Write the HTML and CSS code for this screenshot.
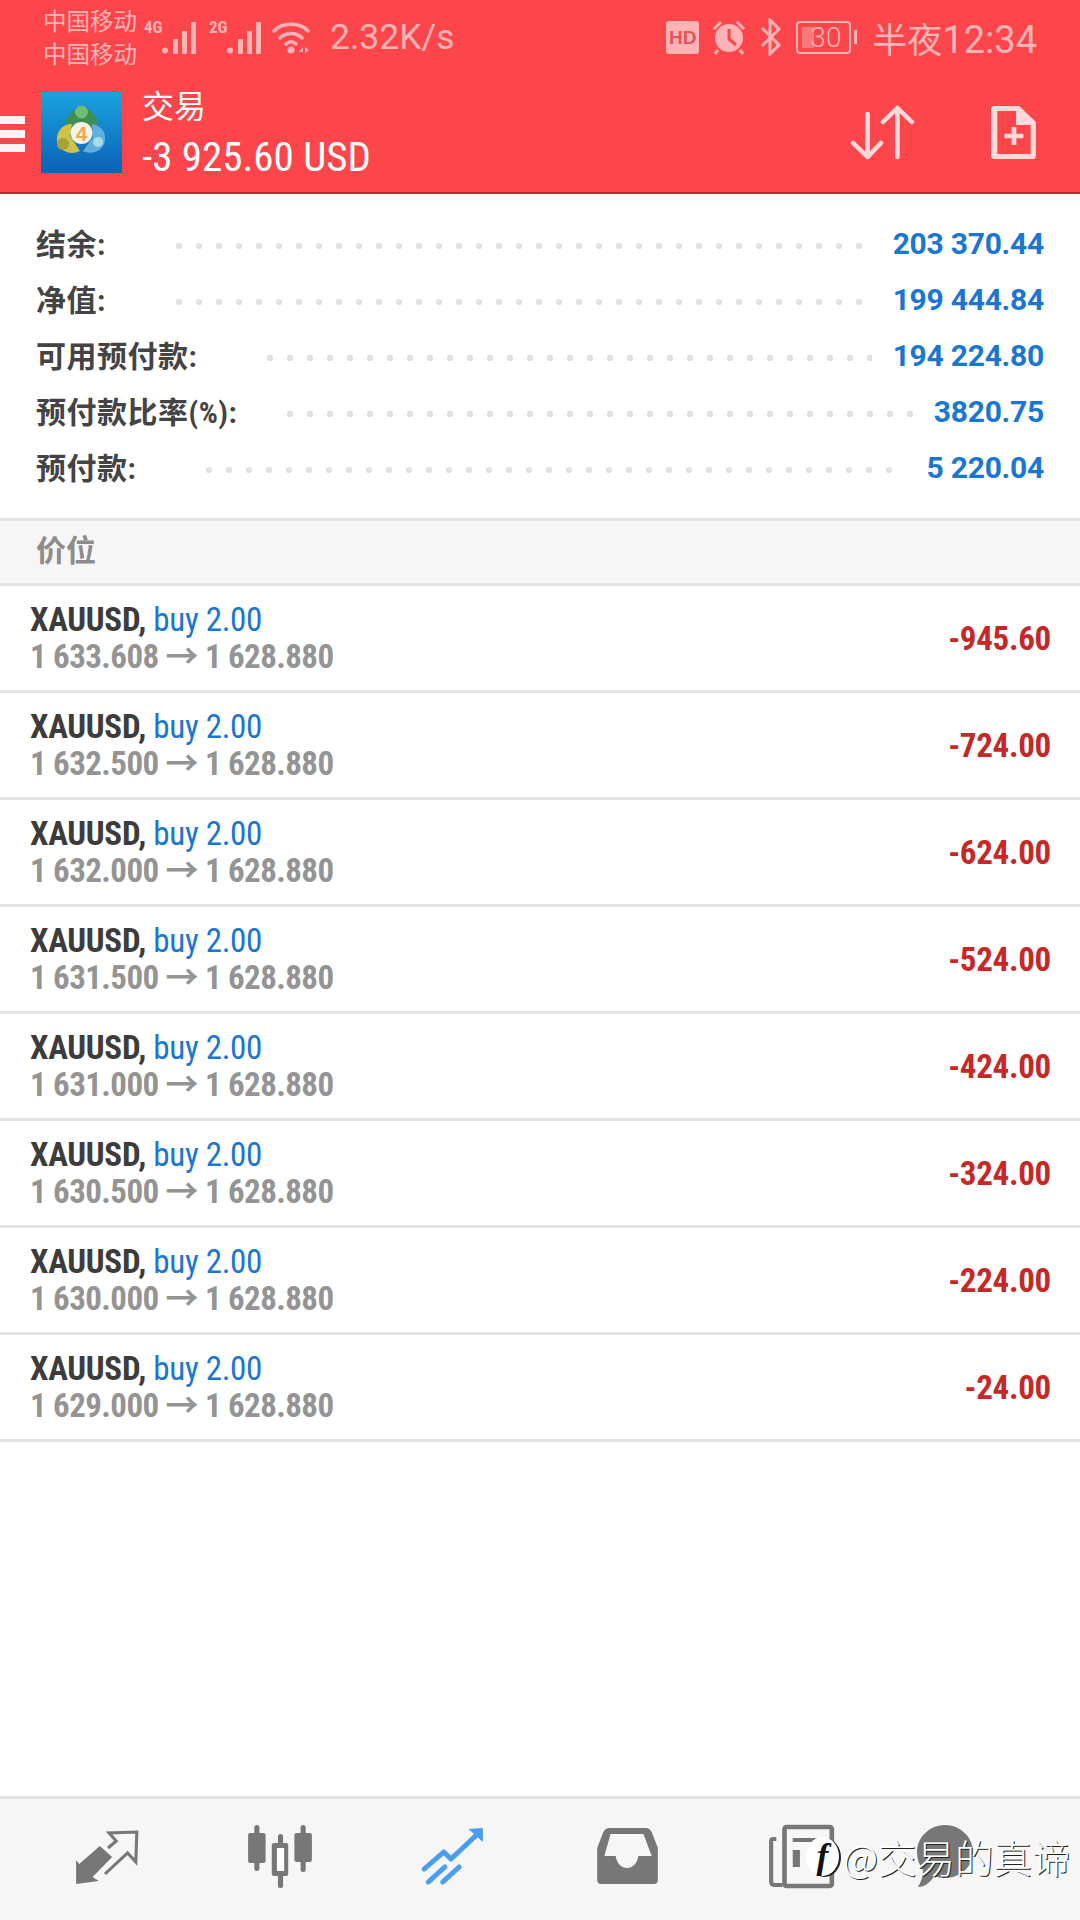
FILE: index.html
```html
<!DOCTYPE html>
<html>
    <head>
        <title>交易</title>
        <meta charset="utf-8">
        <link rel="stylesheet" href="styles.css">
    </head>
    <body>
        <section id="appBar">
            <div id="statusBar">
                <div class="carriers"><span>中国移动</span><span>中国移动</span></div>
                <span class="netType">4G</span>
                <svg class="signal" width="35" height="34" viewBox="0 0 35 34"><g fill="#ffb3b5"><circle cx="3" cy="30.500" r="3"/><rect x="11" y="19" width="5" height="15" rx="1"/><rect x="20" y="11" width="5" height="23" rx="1"/><rect x="29" y="2" width="5" height="32" rx="1"/></g></svg>
                <span class="netType second">2G</span>
                <svg class="signal" width="35" height="34" viewBox="0 0 35 34"><g fill="#ffb3b5"><circle cx="3" cy="30.500" r="3"/><rect x="11" y="19" width="5" height="15" rx="1"/><rect x="20" y="11" width="5" height="23" rx="1"/><rect x="29" y="2" width="5" height="32" rx="1"/></g></svg>
                <svg class="wifi" width="40" height="34" viewBox="0 0 40 34"><g fill="none" stroke="#ffb3b5" stroke-width="3.500" stroke-linecap="round"><path d="M2 11C10 2 28 2 36 11"/><path d="M8 18C14 12 24 12 30 18"/><path d="M14 24C17 21 21 21 24 24"/></g><circle cx="19" cy="30" r="3.500" fill="#ffb3b5"/><path d="M27 32l4-5v5zM33 27l4 3-4 3z" fill="#ffb3b5"/></svg>
                <span class="speed">2.32K/s</span>
                <span class="spacer"></span>
                <span class="hd">HD</span>
                <svg class="alarm" width="36" height="36" viewBox="0 0 34 36"><circle cx="17" cy="19" r="14" fill="#ffb3b5"/><path d="M17 10v10l7 6" fill="none" stroke="#fd464b" stroke-width="3"/><path d="M2 10L9 3M32 10L25 3M6 31l-3 4M28 31l3 4" stroke="#ffb3b5" stroke-width="3"/></svg>
                <svg class="bluetooth" width="24" height="38" viewBox="0 0 24 38"><path d="M3 10L20 27L11 36V2L20 11L3 28" fill="none" stroke="#ffb3b5" stroke-width="3"/></svg>
                <div class="battery"><span class="level"></span><span class="pct">30</span></div>
                <span class="nub"></span>
                <span class="clock"><span class="clockCjk">半夜</span>12:34</span>
            </div>
            <div id="toolbar">
                <div class="burger"><span></span><span></span><span></span></div>
                <svg class="logo" width="81" height="81" viewBox="41 92 81 81">
                    <defs><linearGradient id="logoBg" x1="0" y1="0" x2="0" y2="1"><stop offset="0" stop-color="#1aa3e0"/><stop offset="1" stop-color="#0b62b5"/></linearGradient></defs>
                    <rect x="41" y="92" width="81" height="81" fill="url(#logoBg)"/>
                    <path d="M65 130C64 117 73 108 82 108C91 108 99 117 98 130L82 124Z" fill="#3f8f52"/>
                    <circle cx="81.500" cy="112" r="6.500" fill="#6fbd72"/>
                    <path d="M80 151C70 156 59 151 57 141C56 131 63 124 72 124L70 136Z" fill="#cfc245"/>
                    <circle cx="63" cy="144" r="6" fill="#a9a238"/>
                    <path d="M83 151C93 156 104 150 105 140C106 131 100 125 92 124L93 137Z" fill="#62aede"/>
                    <circle cx="98" cy="142" r="5" fill="#a4dcec"/>
                    <circle cx="81.500" cy="133" r="11" fill="#f7f1e4"/>
                    <text x="81.500" y="141" class="logoFour" text-anchor="middle">4</text>
                </svg>
                <div class="titles">
                    <h1>交易</h1>
                    <p>-3 925.60 USD</p>
                </div>
                <span class="spacer"></span>
                <svg class="sortIcon" width="66" height="58" viewBox="840 104 64 58" preserveAspectRatio="none"><path d="M857 114V157M843 143L857 157L870 143M886 157V109M872 122L886 108L900 122" fill="none" stroke="#ffd9da" stroke-width="4.500" stroke-linecap="round" stroke-linejoin="round"/></svg>
                <svg class="newIcon" width="48" height="58" viewBox="976 104 46 58" preserveAspectRatio="none"><path d="M980 106H1004L1020 122V156Q1020 159 1017 159H980Q977 159 977 156V109Q977 106 980 106Z" fill="#ffd9da"/><path d="M983 111H1001V125H1015V154H983Z" fill="#fd464b"/><path d="M999 127V145M990 136H1008" stroke="#ffd9da" stroke-width="4.500"/></svg>
            </div>
        </section>

        <section id="summary">
            <div class="sumRow"><span class="sumLabel">结余:</span><span class="dots"></span><span class="sumValue">203 370.44</span></div>
            <div class="sumRow"><span class="sumLabel">净值:</span><span class="dots"></span><span class="sumValue">199 444.84</span></div>
            <div class="sumRow"><span class="sumLabel">可用预付款:</span><span class="dots"></span><span class="sumValue">194 224.80</span></div>
            <div class="sumRow"><span class="sumLabel">预付款比率(%):</span><span class="dots tight"></span><span class="sumValue">3820.75</span></div>
            <div class="sumRow"><span class="sumLabel">预付款:</span><span class="dots short"></span><span class="sumValue">5 220.04</span></div>
        </section>

        <h2 id="priceHeader">价位</h2>

        <section id="positions">
            <div class="position"><div><div class="line1">XAUUSD, <span class="buy">buy 2.00</span></div><div class="line2">1 633.608 → 1 628.880</div></div><span class="profit">-945.60</span></div>
            <div class="position"><div><div class="line1">XAUUSD, <span class="buy">buy 2.00</span></div><div class="line2">1 632.500 → 1 628.880</div></div><span class="profit">-724.00</span></div>
            <div class="position"><div><div class="line1">XAUUSD, <span class="buy">buy 2.00</span></div><div class="line2">1 632.000 → 1 628.880</div></div><span class="profit">-624.00</span></div>
            <div class="position"><div><div class="line1">XAUUSD, <span class="buy">buy 2.00</span></div><div class="line2">1 631.500 → 1 628.880</div></div><span class="profit">-524.00</span></div>
            <div class="position"><div><div class="line1">XAUUSD, <span class="buy">buy 2.00</span></div><div class="line2">1 631.000 → 1 628.880</div></div><span class="profit">-424.00</span></div>
            <div class="position"><div><div class="line1">XAUUSD, <span class="buy">buy 2.00</span></div><div class="line2">1 630.500 → 1 628.880</div></div><span class="profit">-324.00</span></div>
            <div class="position"><div><div class="line1">XAUUSD, <span class="buy">buy 2.00</span></div><div class="line2">1 630.000 → 1 628.880</div></div><span class="profit">-224.00</span></div>
            <div class="position"><div><div class="line1">XAUUSD, <span class="buy">buy 2.00</span></div><div class="line2">1 629.000 → 1 628.880</div></div><span class="profit">-24.00</span></div>
        </section>

        <nav id="bottomNav">
            <svg width="72" height="70" viewBox="69 42 70 70" preserveAspectRatio="none"><path d="M74 80L77 84L97 66L109 77L90 97L96 101L74 104Z" fill="#777"/><path d="M105 68L113 61L106 53L133 52L132 82L124 73L102 94" fill="none" stroke="#777" stroke-width="3"/></svg>
            <svg width="72" height="70" viewBox="236 42 70 70" preserveAspectRatio="none"><g fill="#777"><rect x="240" y="53" width="17" height="30" rx="2"/><rect x="246" y="45" width="5" height="46" rx="2.500"/><rect x="263" y="63" width="16" height="33" rx="2"/><rect x="269" y="54" width="5" height="54" rx="2.500"/><rect x="285" y="53" width="17" height="29" rx="2"/><rect x="291" y="45" width="5" height="47" rx="2.500"/></g><rect x="268" y="68" width="7" height="23" fill="#fff"/></svg>
            <svg width="72" height="70" viewBox="403 42 70 70" preserveAspectRatio="none"><g fill="none" stroke="#4a9df0" stroke-width="5" stroke-linecap="round" stroke-linejoin="round"><path d="M411 89L430 72L437 79L465 52"/><path d="M415 102L431 87M429 102L445 87"/></g><path d="M454 49L468 48L468 62Z" fill="#4a9df0"/></svg>
            <svg width="72" height="70" viewBox="49 42 70 70" preserveAspectRatio="none"><path d="M67 48H102Q106 48 108 52L114 68V100Q114 104 110 104H59Q55 104 55 100V68L61 52Q63 48 67 48ZM68 54L62 76H73C75 92 93 92 95 76H108L100 54Z" fill="#777" fill-rule="evenodd"/></svg>
            <svg width="72" height="70" viewBox="219 42 70 70" preserveAspectRatio="none"><path d="M229 59H226Q224 59 224 61V102Q224 105 228 105H235" fill="none" stroke="#777" stroke-width="4"/><rect x="237" y="47" width="46" height="59" rx="2" fill="none" stroke="#777" stroke-width="4.500"/><rect x="245" y="58" width="28" height="4" fill="#777"/><rect x="245" y="70" width="7" height="17" fill="#777"/></svg>
            <svg width="70" height="70" viewBox="910 1822 70 70"><path d="M945 1825C960 1825 973 1837 973 1852C973 1867 960 1878 945 1878C941 1878 937 1877 934 1876C931 1882 925 1887 918 1887C921 1882 923 1876 923 1870C919 1865 917 1859 917 1852C917 1837 930 1825 945 1825Z" fill="#777"/></svg>
        </nav>

        <div id="watermark"><span class="wmLogo">f</span><span class="wmText">@交易的真谛</span></div>
    </body>
</html>
```

FILE: styles.css
```css
body {
    width: 1080px;
    height: 1920px;
    margin: 0;
    position: relative;
    overflow: hidden;
    background-color: white;
    font-family: "Roboto Condensed", "Noto Sans CJK SC", sans-serif;
}

svg {
    display: block;
}

.spacer {
    flex: 1;
}

#appBar {
    height: 192px;
    border-bottom: 2px solid #b92a30;
    background-color: #fd464b;
}

#statusBar {
    height: 74px;
    padding: 0 43px 0 43px;
    box-sizing: border-box;
    display: flex;
    align-items: center;
    color: #ffb3b5;
}

.carriers {
    width: 101px;
    display: flex;
    flex-direction: column;
    font: 23.500px/33px "Noto Sans CJK SC", sans-serif;
}

.netType {
    width: 18px;
    margin-top: -20px;
    font: bold 17px "Roboto Condensed", sans-serif;
}

.netType.second {
    margin-left: 12px;
}

.wifi {
    margin-left: 10px;
}

.speed {
    margin-left: 18px;
    font: 400 35.500px Roboto, sans-serif;
}

.hd {
    width: 33px;
    height: 33px;
    border-radius: 3px;
    background-color: #ffb3b5;
    color: #e0565a;
    font: bold 19px/33px "Liberation Sans", sans-serif;
    text-align: center;
}

.alarm {
    margin-left: 12px;
}

.bluetooth {
    margin-left: 12px;
}

.battery {
    width: 55px;
    height: 33px;
    margin-left: 13px;
    box-sizing: border-box;
    border: 2px solid #ffb3b5;
    border-radius: 4px;
    display: flex;
    align-items: center;
    position: relative;
}

.level {
    position: absolute;
    left: 4px;
    top: 4px;
    width: 12px;
    height: 21px;
    background-color: #f9787c;
}

.pct {
    position: relative;
    margin-left: 12px;
    font: 300 28px Roboto, sans-serif;
}

.nub {
    width: 3px;
    height: 14px;
    margin-left: 3px;
    background-color: #ffb3b5;
}

.clock {
    margin-left: 15px;
    white-space: nowrap;
    font: 400 38px Roboto, sans-serif;
}

.clockCjk {
    font: 35px "Noto Sans CJK SC", sans-serif;
}

#toolbar {
    height: 118px;
    padding: 0 42px 0 0;
    box-sizing: border-box;
    display: flex;
    align-items: flex-start;
}

.burger {
    width: 25px;
    margin-top: 42px;
    display: flex;
    flex-direction: column;
    gap: 6px;
}

.burger span {
    height: 8px;
    background-color: #fff3f3;
}

.logo {
    margin: 18px 0 0 16px;
}

.logoFour {
    font: bold 20px "Liberation Sans", sans-serif;
    fill: #eca84a;
}

.titles {
    margin-left: 20px;
    color: white;
}

.titles h1 {
    margin: 8px 0 0 0;
    font: normal 32px/44px "Noto Sans CJK SC", sans-serif;
}

.titles p {
    margin: 6px 0 0 0;
    font-size: 41px;
    line-height: 50px;
}

.sortIcon {
    margin-top: 30px;
}

.newIcon {
    margin: 30px 0 0 74px;
}

#summary {
    height: 324px;
    padding: 21px 36px 0 36px;
    box-sizing: border-box;
}

.sumRow {
    height: 56px;
    display: flex;
    align-items: center;
}

.sumLabel {
    margin-top: -2px;
    color: #444;
    font-size: 30px;
    font-weight: bold;
    letter-spacing: 0.5px;
    white-space: nowrap;
}

.dots {
    flex: 1;
    height: 8px;
    margin: 6px 21px 0 63px;
    background-image: radial-gradient(circle, #e2e2e2 3px, transparent 3.500px);
    background-size: 20px 8px;
    background-repeat: repeat-x;
}

.dots.tight {
    margin: 6px 16px 0 43px;
}

.dots.short {
    margin-right: 28px;
}

.sumValue {
    color: #1976d2;
    font: bold 30px Roboto, sans-serif;
    letter-spacing: -0.25px;
    white-space: nowrap;
}

#priceHeader {
    height: 62px;
    margin: 0;
    padding-left: 36px;
    border-top: 3px solid #e3e3e3;
    border-bottom: 3px solid #e3e3e3;
    background-color: #f6f6f6;
    color: #8c8c8c;
    font: bold 30px/54px "Noto Sans CJK SC", sans-serif;
}

.position {
    height: 107px;
    padding: 0 29px 0 30px;
    box-sizing: border-box;
    border-bottom: 3px solid #e3e3e3;
    display: flex;
    justify-content: space-between;
    align-items: center;
}

.line1 {
    color: #3c3c3c;
    font-size: 33px;
    font-weight: bold;
    line-height: 37px;
    letter-spacing: -0.3px;
}

.buy {
    color: #1976d2;
    font-weight: normal;
}

.line2 {
    color: #949494;
    font-size: 33px;
    font-weight: bold;
    line-height: 37px;
    letter-spacing: -0.6px;
}

.profit {
    color: #c62828;
    font-size: 33px;
    font-weight: bold;
    letter-spacing: -0.3px;
}

#bottomNav {
    position: absolute;
    left: 0;
    right: 0;
    bottom: 0;
    height: 124px;
    padding: 23px 0 0 71px;
    box-sizing: border-box;
    border-top: 3px solid #e3e3e3;
    background-color: #f6f6f6;
    display: grid;
    grid-template-columns: 172.500px 172.500px 174.500px 175.500px 144px 70px;
}

#watermark {
    position: absolute;
    left: 806px;
    top: 1828px;
    display: flex;
    align-items: center;
    color: white;
    text-shadow: 1px 1px 0 #222;
    font: 200 38.500px/56px "Noto Sans CJK SC", sans-serif;
}

.wmLogo {
    width: 33px;
    height: 39px;
    margin-right: 4px;
    border-radius: 50%;
    background-color: white;
    box-shadow: 2px 1px 0 #222;
    color: #111;
    text-shadow: none;
    font: italic bold 36px/39px "Liberation Serif", serif;
    text-align: center;
}
```
